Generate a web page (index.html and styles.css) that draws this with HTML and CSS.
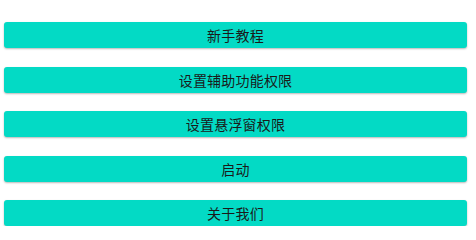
FILE: index.html
```html
<!DOCTYPE html>
<html lang="zh">
<head>
<meta charset="utf-8">
<link rel="stylesheet" href="styles.css">
</head>
<body>
<div class="menu">
  <div class="btn">新手教程</div>
  <div class="btn">设置辅助功能权限</div>
  <div class="btn">设置悬浮窗权限</div>
  <div class="btn">启动</div>
  <div class="btn">关于我们</div>
</div>
</body>
</html>
```
FILE: styles.css
```css
html, body {
  margin: 0;
  padding: 0;
  background: #ffffff;
}
.menu {
  display: flex;
  flex-direction: column;
  gap: 18.5px;
  padding: 22px 9px 0 4px;
}
.btn {
  height: 26px;
  background: #03dac5;
  border-radius: 3px;
  box-shadow: 0 1px 2px rgba(0,0,0,0.28);
  display: flex;
  align-items: center;
  justify-content: center;
  font-family: "Noto Sans CJK SC", "Noto Sans", sans-serif;
  font-size: 14px;
  color: #1a1a1a;
  letter-spacing: 0.2px;
}
```
